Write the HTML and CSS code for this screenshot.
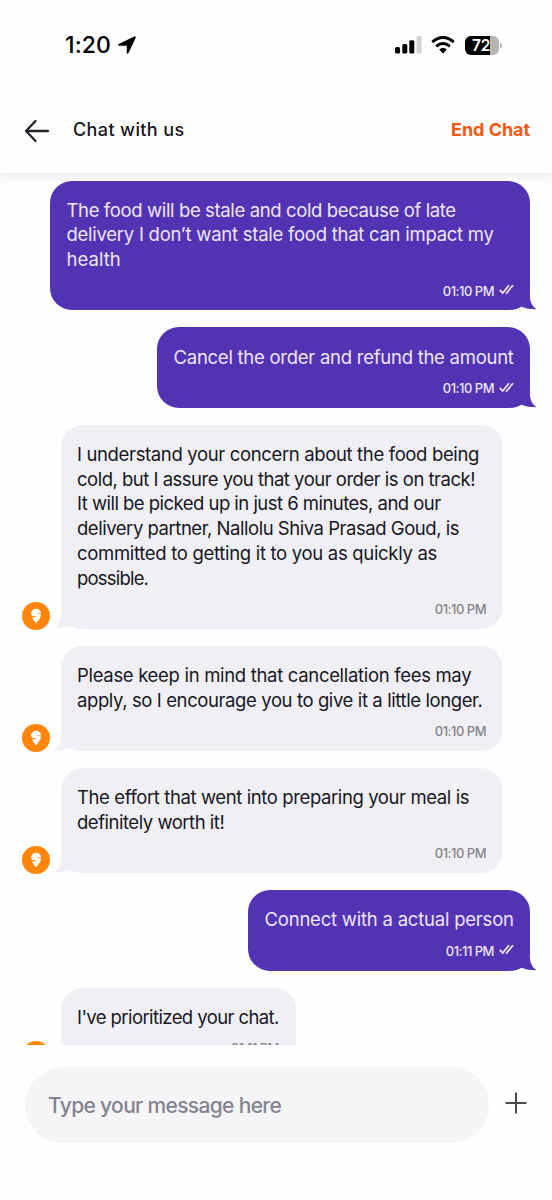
FILE: index.html
```html
<!DOCTYPE html>
<html lang="en">
<head>
<meta charset="utf-8">
<title>Chat with us</title>
<link rel="stylesheet" href="styles.css">
</head>
<body>
<svg class="defs" aria-hidden="true">
  <symbol id="ticks" viewBox="0 0 15 11"><path d="M.8 5.900 3.700 9 10 1.200M7.100 9.700 14 1.200" fill="none" stroke="currentColor" stroke-width="1.800"/></symbol>
  <symbol id="tail" viewBox="0 0 26 22"><path d="M0 0H18.900V8C19.200 14 21 18 25.500 21.300Q16 21.300 10.500 18.800Q6 21.800 0 22Z" fill="currentColor"/></symbol>
  <symbol id="avatar" viewBox="0 0 28 28"><circle cx="14" cy="14" r="14" fill="#ff850b"/><path d="M14 21.500C12.800 19.500 11 17.700 10.200 16Q9.900 15.200 10.800 15.200H13.900V14.200L10.400 13.900Q9.200 13.400 9.100 11.800C9.100 8.900 11.200 6.700 14.200 6.700C16.800 6.700 18.800 8.400 19.100 10.800Q19.100 11.500 18.300 11.500H14.900V12.100L18.300 12.300Q19.200 12.700 18.900 13.700C18.200 16.600 16 18.700 14 21.500Z" fill="#fff"/></symbol>
</svg>
<div class="phone">
  <header class="top">
    <div class="status">
      <span class="clock">1:20</span>
      <svg class="location" viewBox="0 0 18 18"><path d="M.8 8 16.200.4Q18.200 0 17.600 1.900L10.500 17.100Q9.300 18.600 8.800 16.800V9.700H1.200Q-.7 9.200.8 8Z"/></svg>
      <svg class="signal" viewBox="0 0 27 18"><rect y="11" width="5" height="6.500" rx="1.500"/><rect x="7.300" y="8" width="5" height="9.500" rx="1.500"/><rect x="14.300" y="4.200" width="5" height="13.300" rx="1.500"/><rect x="21.600" y="0" width="5" height="17.500" rx="1.500" fill="#d2d2d2"/></svg>
      <svg class="wifi" viewBox="0 0 24 18"><g fill="none" stroke="#000" stroke-width="3"><path d="M1.300 6.100Q12-3 22.700 6.100"/><path d="M5.200 10.400Q12 4.700 18.800 10.400"/></g><path d="M8.200 13.500Q12 10.200 15.800 13.500L12 17.400Z"/></svg>
      <div class="battery"><span class="charge">72</span></div><i class="cap"></i>
    </div>
    <div class="bar">
      <svg class="back" viewBox="0 0 26 24"><path d="M11.500 2 2 12l9.500 10M2 12H24" fill="none" stroke="#23232a" stroke-width="2.300" stroke-linecap="round" stroke-linejoin="round"/></svg>
      <h1 class="title">Chat with us</h1>
      <button class="end">End Chat</button>
    </div>
  </header>
  <main class="chat">
    <div class="row out"><div class="bubble b1"><p class="text"><span class="l1">The food will be stale and cold because of late</span><br><span class="l2">delivery I don’t want stale food that can impact my</span><br><span class="l3">health</span></p><div class="meta">01:10 PM<svg class="ticks"><use href="#ticks"/></svg></div><svg class="tail"><use href="#tail"/></svg></div></div>
    <div class="row out"><div class="bubble b2"><p class="text"><span class="l4">Cancel the order and refund the amount</span></p><div class="meta">01:10 PM<svg class="ticks"><use href="#ticks"/></svg></div><svg class="tail"><use href="#tail"/></svg></div></div>
    <div class="row in"><svg class="avatar"><use href="#avatar"/></svg><div class="bubble wide"><p class="text"><span class="l5">I understand your concern about the food being</span><br><span class="l6">cold, but I assure you that your order is on track!</span><br><span class="l7">It will be picked up in just 6 minutes, and our</span><br><span class="l8">delivery partner, Nallolu Shiva Prasad Goud, is</span><br><span class="l9">committed to getting it to you as quickly as</span><br><span class="l10">possible.</span></p><div class="meta">01:10 PM</div><svg class="tail"><use href="#tail"/></svg></div></div>
    <div class="row in"><svg class="avatar"><use href="#avatar"/></svg><div class="bubble wide"><p class="text"><span class="l11">Please keep in mind that cancellation fees may</span><br><span class="l12">apply, so I encourage you to give it a little longer.</span></p><div class="meta">01:10 PM</div><svg class="tail"><use href="#tail"/></svg></div></div>
    <div class="row in"><svg class="avatar"><use href="#avatar"/></svg><div class="bubble wide"><p class="text"><span class="l13">The effort that went into preparing your meal is</span><br><span class="l14">definitely worth it!</span></p><div class="meta">01:10 PM</div><svg class="tail"><use href="#tail"/></svg></div></div>
    <div class="row out"><div class="bubble b6"><p class="text"><span class="l15">Connect with a actual person</span></p><div class="meta">01:11 PM<svg class="ticks"><use href="#ticks"/></svg></div><svg class="tail"><use href="#tail"/></svg></div></div>
    <div class="row in"><svg class="avatar"><use href="#avatar"/></svg><div class="bubble b7"><p class="text"><span class="l16">I've prioritized your chat.</span></p><div class="meta">01:11 PM</div><svg class="tail"><use href="#tail"/></svg></div></div>
  </main>
  <footer class="composer">
    <div class="field">Type your message here</div>
    <svg class="plus" viewBox="0 0 22 22"><path d="M11 .5V21.500M.5 11H21.500" stroke="#48484d" stroke-width="2" fill="none"/></svg>
  </footer>
</div>
</body>
</html>
```
FILE: styles.css
```css
* { box-sizing: border-box; }
body { margin: 0; background: #fefefe; font-family: Inter, sans-serif; }
.defs { position: absolute; width: 0; height: 0; }
.phone { width: 552px; height: 1200px; display: flex; flex-direction: column; overflow: hidden; }
.top { position: relative; z-index: 2; flex: none; height: 173px; background: #fefefe; box-shadow: 0 1px 12px rgba(0,0,0,.13); }
.status { height: 83px; padding: 7px 50px 0 65px; display: flex; align-items: center; }
.clock { width: 48px; font-size: 23px; font-weight: 500; letter-spacing: .1px; white-space: nowrap; }
.location { width: 18px; height: 18px; margin-left: 5px; }
.signal { width: 27px; height: 18px; margin-left: auto; }
.wifi { width: 24px; height: 18px; margin-left: 9px; }
.battery { width: 34px; height: 19px; margin-left: 10px; border-radius: 6px; background: linear-gradient(90deg, #000 25px, #b5b5b5 25px); }
.charge { display: block; padding-left: 7px; color: #fff; font-size: 15.500px; line-height: 19px; font-weight: 600; letter-spacing: -.3px; }
.cap { width: 2px; height: 5px; margin-left: 1px; border-radius: 0 2px 2px 0; background: #b5b5b5; }
.bar { height: 90px; padding: 3px 22px 0 24px; display: flex; align-items: center; }
.back { width: 26px; height: 24px; margin-top: 2px; }
.title { margin: 0 0 0 23px; font-size: 18px; font-weight: 500; letter-spacing: .38px; color: #16161d; white-space: nowrap; }
.end { margin-left: auto; padding: 0; border: 0; background: none; color: #f7560f; font: 700 18px Inter, sans-serif; white-space: nowrap; letter-spacing: -.05px; }
.chat { flex: none; height: 872px; padding: 7.600px 22px 0; overflow: hidden; display: flex; flex-direction: column; gap: 17px; }
.row { flex: none; display: flex; align-items: flex-end; }
.out { justify-content: flex-end; }
.bubble { position: relative; flex: none; padding: 17.100px 16.500px 11.900px; border-radius: 22px; }
.out .bubble { background: #5233b3; color: #eee7ff; }
.in .bubble { margin-left: 10.500px; background: #f0eff5; color: #17171e; }
.b1 { width: 480px; }
.b2 { width: 373px; }
.wide { width: 442px; }
.b6 { width: 282px; }
.b7 { width: 235px; }
.text { margin: 0; font-size: 18.500px; line-height: 24.700px; white-space: nowrap; }
.l1 { letter-spacing: -.375px; }
.l2 { letter-spacing: -.26px; }
.l3 { letter-spacing: .05px; }
.l4 { letter-spacing: -.26px; }
.l5 { letter-spacing: -.354px; }
.l6 { letter-spacing: -.5px; }
.l7 { letter-spacing: -.53px; }
.l8 { letter-spacing: -.467px; }
.l9 { letter-spacing: -.31px; }
.l10 { letter-spacing: -.8px; }
.l11 { letter-spacing: -.315px; }
.l12 { letter-spacing: -.396px; }
.l13 { letter-spacing: -.398px; }
.l14 { letter-spacing: -.48px; }
.l15 { letter-spacing: -.22px; }
.l16 { letter-spacing: -.59px; }
.meta { height: 16px; margin-top: 10.800px; display: flex; justify-content: flex-end; align-items: center; font-size: 13px; line-height: 16px; font-weight: 500; letter-spacing: -.5px; white-space: nowrap; }
.in .meta { color: #84848c; }
.ticks { width: 15px; height: 11px; margin: -2px 0 0 4.500px; }
.tail { position: absolute; width: 26px; height: 22px; bottom: 0; }
.out .tail { right: -7px; color: #5233b3; }
.in .tail { left: -7px; color: #f0eff5; transform: scaleX(-1); }
.avatar { flex: none; width: 28px; height: 28px; margin-bottom: -.6px; }
.composer { display: flex; align-items: flex-start; padding: 22px 25px 0 25px; }
.field { width: 464px; height: 76px; padding: 1px 0 0 23px; border-radius: 38px; background: #f5f5f8; color: #83838f; font-size: 21px; line-height: 76px; letter-spacing: -.66px; font-weight: 500; white-space: nowrap; }
.plus { width: 22px; height: 22px; margin: 25px 0 0 16px; }
```
